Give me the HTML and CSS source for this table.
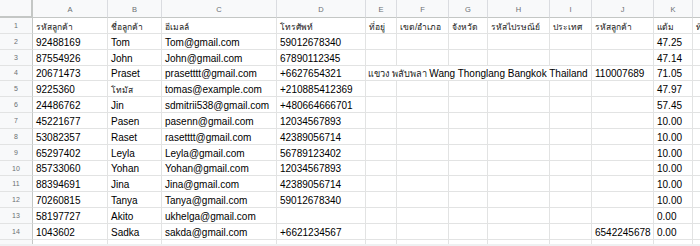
FILE: index.html
```html
<!DOCTYPE html>
<html lang="th">
<head>
<meta charset="utf-8">
<title>Sheet</title>
<link rel="stylesheet" href="styles.css">
</head>
<body>
<div class="view">
<div class="sheet">
<div class="corner"></div><div class="ch">A</div><div class="ch">B</div><div class="ch">C</div><div class="ch">D</div><div class="ch">E</div><div class="ch">F</div><div class="ch">G</div><div class="ch">H</div><div class="ch">I</div><div class="ch">J</div><div class="ch">K</div><div class="ch">L</div>
<div class="rn">1</div><div class="c th">รหัสลูกค้า</div><div class="c th">ชื่อลูกค้า</div><div class="c th">อีเมลล์</div><div class="c th">โทรศัพท์</div><div class="c th">ที่อยู่</div><div class="c th">เขต/อำเภอ</div><div class="c th">จังหวัด</div><div class="c th">รหัสไปรษณีย์</div><div class="c th">ประเทศ</div><div class="c th">รหัสลูกค้า</div><div class="c th">แต้ม</div><div class="c th">ที่</div>
<div class="rn">2</div><div class="c">92488169</div><div class="c">Tom</div><div class="c">Tom@gmail.com</div><div class="c">59012678340</div><div class="c"></div><div class="c"></div><div class="c"></div><div class="c"></div><div class="c"></div><div class="c"></div><div class="c">47.25</div><div class="c"></div>
<div class="rn">3</div><div class="c">87554926</div><div class="c">John</div><div class="c">John@gmail.com</div><div class="c">67890112345</div><div class="c"></div><div class="c"></div><div class="c"></div><div class="c"></div><div class="c"></div><div class="c"></div><div class="c">47.14</div><div class="c"></div>
<div class="rn">4</div><div class="c">20671473</div><div class="c">Praset</div><div class="c">prasetttt@gmail.com</div><div class="c">+6627654321</div><div class="c span5"><span class="thi">แขวง พลับพลา</span>&nbsp;Wang Thonglang Bangkok Thailand</div><div class="c">110007689</div><div class="c">71.05</div><div class="c"></div>
<div class="rn">5</div><div class="c">9225360</div><div class="c th">โทมัส</div><div class="c">tomas@example.com</div><div class="c">+210885412369</div><div class="c"></div><div class="c"></div><div class="c"></div><div class="c"></div><div class="c"></div><div class="c"></div><div class="c">47.97</div><div class="c"></div>
<div class="rn">6</div><div class="c">24486762</div><div class="c">Jin</div><div class="c">sdmitrii538@gmail.com</div><div class="c">+480664666701</div><div class="c"></div><div class="c"></div><div class="c"></div><div class="c"></div><div class="c"></div><div class="c"></div><div class="c">57.45</div><div class="c"></div>
<div class="rn">7</div><div class="c">45221677</div><div class="c">Pasen</div><div class="c">pasenn@gmail.com</div><div class="c">12034567893</div><div class="c"></div><div class="c"></div><div class="c"></div><div class="c"></div><div class="c"></div><div class="c"></div><div class="c">10.00</div><div class="c"></div>
<div class="rn">8</div><div class="c">53082357</div><div class="c">Raset</div><div class="c">rasetttt@gmail.com</div><div class="c">42389056714</div><div class="c"></div><div class="c"></div><div class="c"></div><div class="c"></div><div class="c"></div><div class="c"></div><div class="c">10.00</div><div class="c"></div>
<div class="rn">9</div><div class="c">65297402</div><div class="c">Leyla</div><div class="c">Leyla@gmail.com</div><div class="c">56789123402</div><div class="c"></div><div class="c"></div><div class="c"></div><div class="c"></div><div class="c"></div><div class="c"></div><div class="c">10.00</div><div class="c"></div>
<div class="rn">10</div><div class="c">85733060</div><div class="c">Yohan</div><div class="c">Yohan@gmail.com</div><div class="c">12034567893</div><div class="c"></div><div class="c"></div><div class="c"></div><div class="c"></div><div class="c"></div><div class="c"></div><div class="c">10.00</div><div class="c"></div>
<div class="rn">11</div><div class="c">88394691</div><div class="c">Jina</div><div class="c">Jina@gmail.com</div><div class="c">42389056714</div><div class="c"></div><div class="c"></div><div class="c"></div><div class="c"></div><div class="c"></div><div class="c"></div><div class="c">10.00</div><div class="c"></div>
<div class="rn">12</div><div class="c">70260815</div><div class="c">Tanya</div><div class="c">Tanya@gmail.com</div><div class="c">59012678340</div><div class="c"></div><div class="c"></div><div class="c"></div><div class="c"></div><div class="c"></div><div class="c"></div><div class="c">10.00</div><div class="c"></div>
<div class="rn">13</div><div class="c">58197727</div><div class="c">Akito</div><div class="c">ukhelga@gmail.com</div><div class="c"></div><div class="c"></div><div class="c"></div><div class="c"></div><div class="c"></div><div class="c"></div><div class="c"></div><div class="c">0.00</div><div class="c"></div>
<div class="rn">14</div><div class="c">1043602</div><div class="c">Sadka</div><div class="c">sakda@gmail.com</div><div class="c">+6621234567</div><div class="c"></div><div class="c"></div><div class="c"></div><div class="c"></div><div class="c"></div><div class="c">6542245678</div><div class="c">0.00</div><div class="c"></div>
<div class="rn"></div><div class="c"></div><div class="c"></div><div class="c"></div><div class="c"></div><div class="c"></div><div class="c"></div><div class="c"></div><div class="c"></div><div class="c"></div><div class="c"></div><div class="c"></div><div class="c"></div>
</div>
</div>
<div class="footer"></div>
</body>
</html>
```
FILE: styles.css
```css
html, body {
  margin: 0;
  padding: 0;
  background: #ffffff;
  overflow: hidden;
}
body {
  width: 700px;
  height: 246px;
  font-family: "Liberation Sans", Arial, "Noto Sans", sans-serif;
}
.view {
  width: 700px;
  height: 244px;
  overflow: hidden;
}
.sheet {
  display: grid;
  grid-template-columns: 33px 75px 54px 115px 89px 31px 52px 39px 62px 42px 62px 39px 40px;
  grid-template-rows: 18px repeat(15, 15.85px);
  width: 733px;
}
.sheet > div {
  box-sizing: border-box;
  border-right: 1px solid #e2e3e3;
  border-bottom: 1px solid #e2e3e3;
  overflow: hidden;
  white-space: nowrap;
}
.sheet > .corner {
  background: #f8f9fa;
  border-right: 2px solid #c4c7c5;
  border-bottom: 2px solid #c4c7c5;
}
.sheet > .ch {
  background: #f8f9fa;
  border-right: 1px solid #dadce0;
  border-bottom: 1px solid #c4c7c5;
  color: #6b6f73;
  font-size: 7.5px;
  display: flex;
  align-items: center;
  justify-content: center;
  padding-top: 1px;
}
.sheet > .rn {
  background: #f8f9fa;
  border-right: 1px solid #c4c7c5;
  border-bottom: 1px solid #e2e3e3;
  color: #6b6f73;
  font-size: 7px;
  display: flex;
  align-items: center;
  justify-content: center;
}
.sheet > .c {
  color: #000000;
  font-size: 10px;
  line-height: 12px;
  padding: 0 2px 0 3px;
  display: flex;
  align-items: flex-end;
}
.sheet > .th {
  font-size: 8.5px;
  color: #1a1a1a;
}
.thi {
  font-size: 9.2px;
  color: #1a1a1a;
}
.sheet > .span5 {
  grid-column: span 5;
  padding-left: 2px;
}
.footer {
  height: 2px;
  background: #eef0f1;
}
```
